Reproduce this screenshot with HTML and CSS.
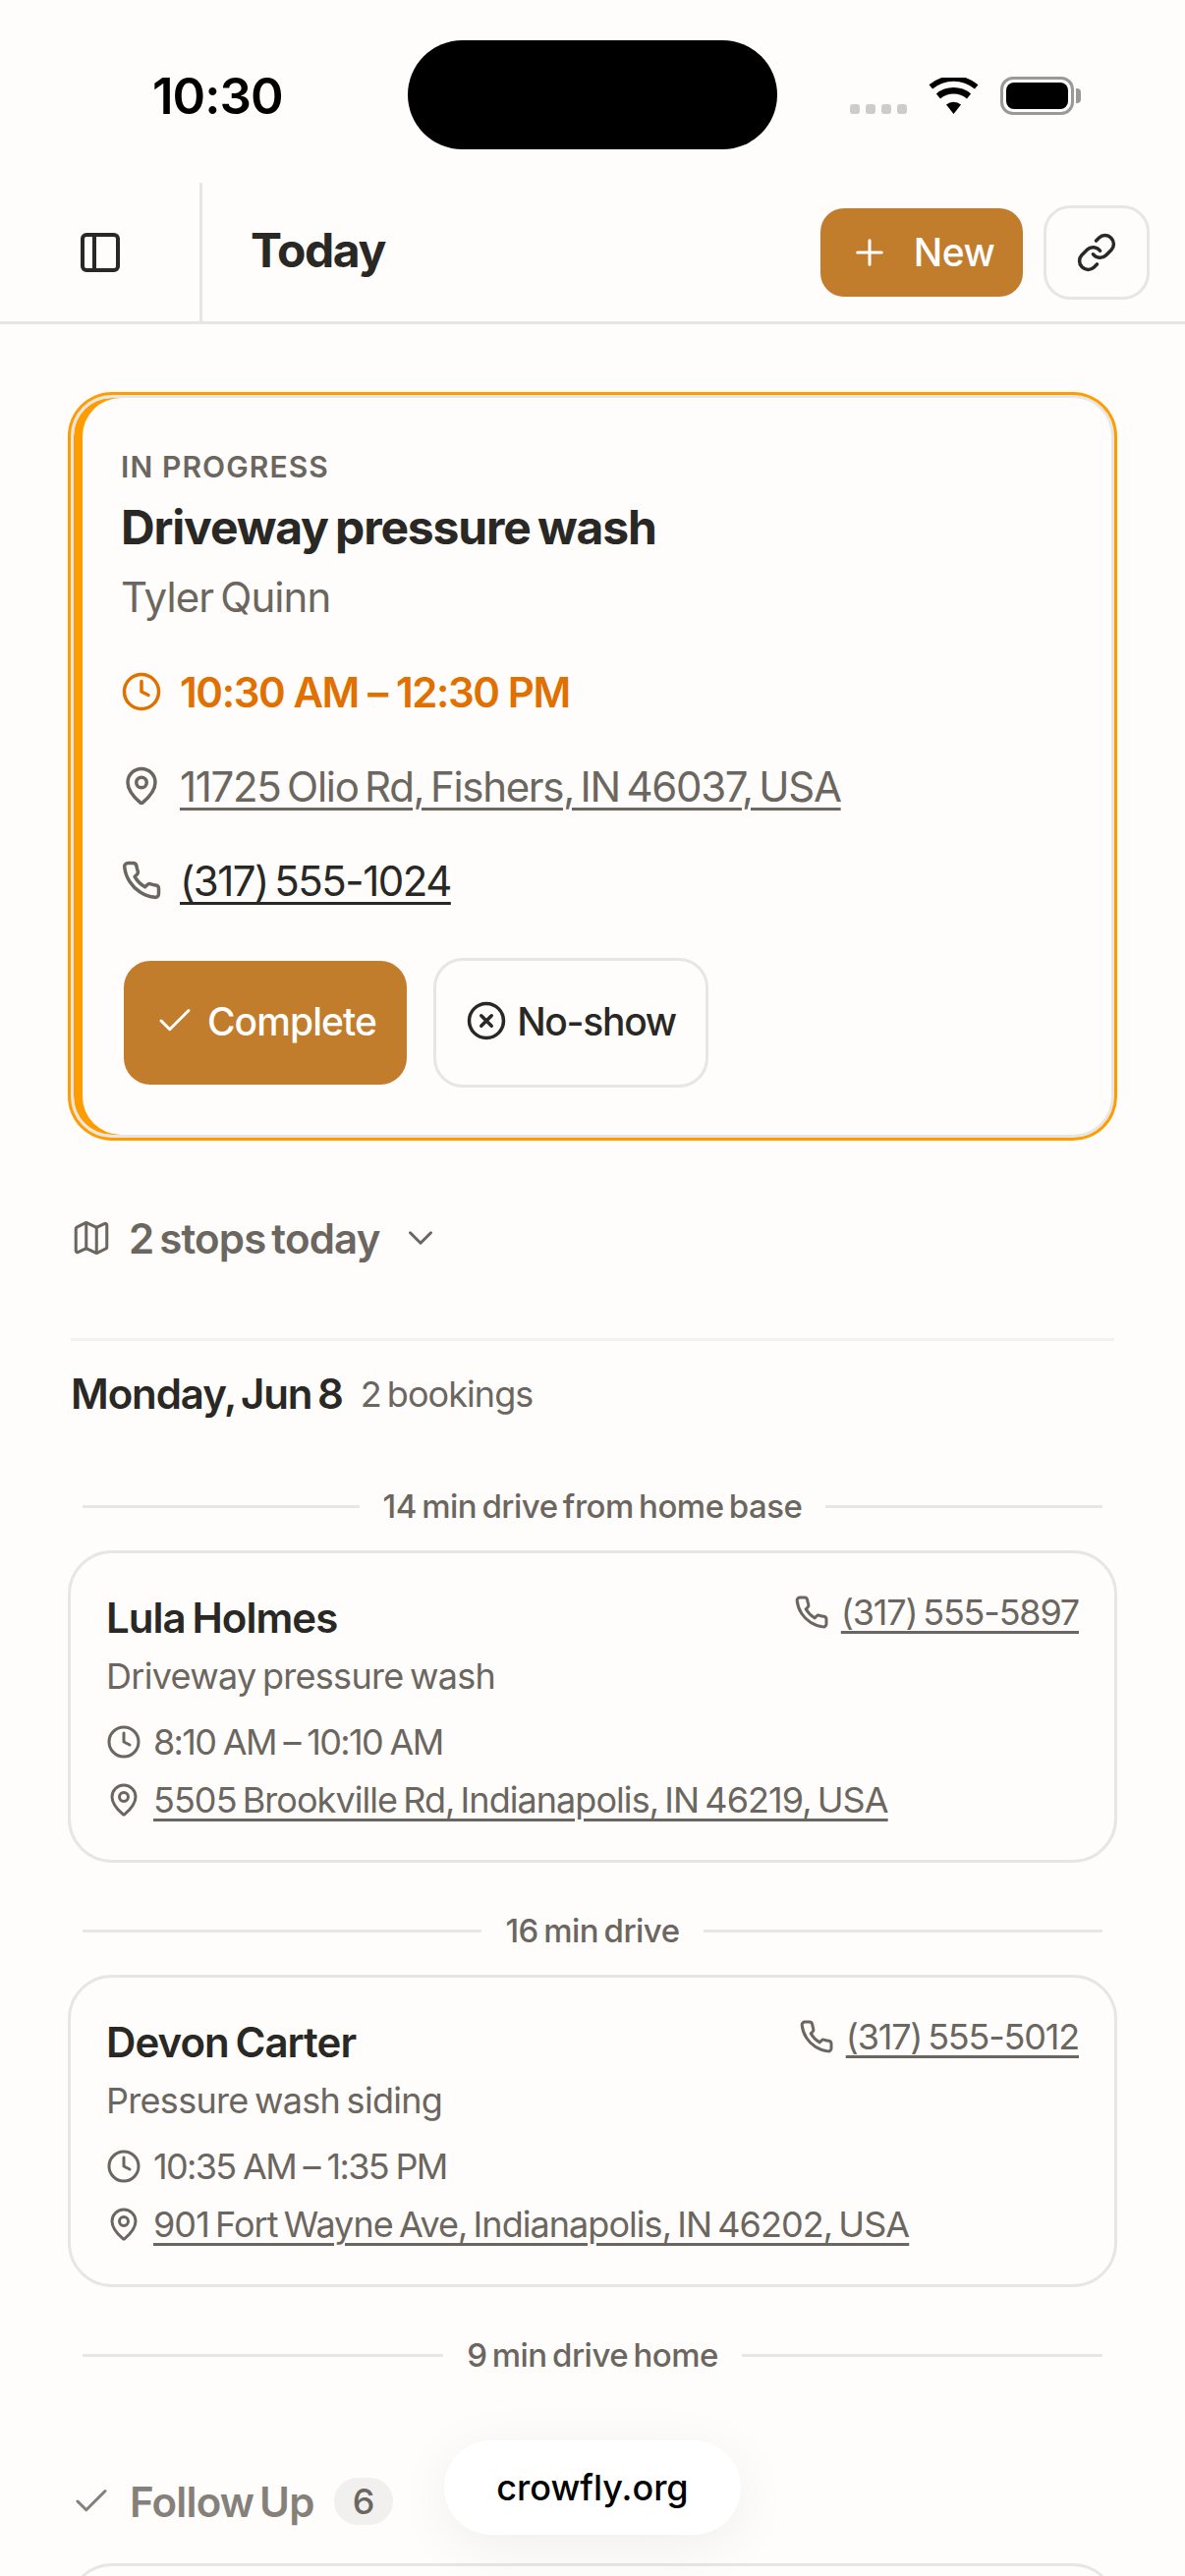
FILE: index.html
```html
<!DOCTYPE html>
<html lang="en">
<head>
<meta charset="utf-8">
<title>Today</title>
<link rel="stylesheet" href="styles.css">
</head>
<body>
<svg class="defs" aria-hidden="true">
  <symbol id="i-panel" viewBox="0 0 24 24"><rect x="3" y="3" width="18" height="18" rx="2"/><path d="M9 3v18"/></symbol>
  <symbol id="i-plus" viewBox="0 0 24 24"><path d="M5 12h14M12 5v14"/></symbol>
  <symbol id="i-link" viewBox="0 0 24 24"><path d="M10 13a5 5 0 0 0 7.54.54l3-3a5 5 0 0 0-7.07-7.07l-1.72 1.71"/><path d="M14 11a5 5 0 0 0-7.54-.54l-3 3a5 5 0 0 0 7.07 7.07l1.71-1.71"/></symbol>
  <symbol id="i-check" viewBox="0 0 24 24"><path d="M20 6 9 17l-5-5"/></symbol>
  <symbol id="i-x" viewBox="0 0 24 24"><circle cx="12" cy="12" r="10"/><path d="m15 9-6 6M9 9l6 6"/></symbol>
  <symbol id="i-clock" viewBox="0 0 24 24"><circle cx="12" cy="12" r="10"/><path d="M12 6v6l4 2"/></symbol>
  <symbol id="i-pin" viewBox="0 0 24 24"><path d="M20 10c0 4.993-5.539 10.193-7.399 11.799a1 1 0 0 1-1.202 0C9.539 20.193 4 14.993 4 10a8 8 0 0 1 16 0"/><circle cx="12" cy="10" r="3"/></symbol>
  <symbol id="i-phone" viewBox="0 0 24 24"><path d="M22 16.92v3a2 2 0 0 1-2.18 2 19.79 19.79 0 0 1-8.63-3.07 19.5 19.5 0 0 1-6-6 19.79 19.79 0 0 1-3.07-8.67A2 2 0 0 1 4.11 2h3a2 2 0 0 1 2 1.72 12.84 12.84 0 0 0 .7 2.81 2 2 0 0 1-.45 2.11L8.09 9.91a16 16 0 0 0 6 6l1.27-1.27a2 2 0 0 1 2.11-.45 12.84 12.84 0 0 0 2.81.7A2 2 0 0 1 22 16.92z"/></symbol>
  <symbol id="i-map" viewBox="0 0 24 24"><path d="M14.106 5.553a2 2 0 0 0 1.788 0l3.659-1.83A1 1 0 0 1 21 4.619v12.764a1 1 0 0 1-.553.894l-4.553 2.277a2 2 0 0 1-1.788 0l-4.212-2.106a2 2 0 0 0-1.788 0l-3.659 1.83A1 1 0 0 1 3 19.381V6.618a1 1 0 0 1 .553-.894l4.553-2.277a2 2 0 0 1 1.788 0z"/><path d="M15 5.764v15M9 3.236v15"/></symbol>
  <symbol id="i-chevron" viewBox="0 0 24 24"><path d="m6 9 6 6 6-6"/></symbol>
</svg>

<div class="screen">
  <div class="statusbar">
    <div class="clock">10:30</div>
    <div class="island"></div>
    <div class="status-icons">
      <div class="signal"><span></span><span></span><span></span><span></span></div>
      <svg class="wifi" viewBox="0 0 50 38"><path d="M25 37 17.5 27.6a11.5 11.5 0 0 1 15 0z"/><path d="M11.5 21.5 7.4 16.4a27 27 0 0 1 35.2 0l-4.1 5.1a20.5 20.5 0 0 0-27 0z"/><path d="M3.6 11.6 0 7.2a39 39 0 0 1 50 0l-3.6 4.4a33 33 0 0 0-42.8 0z"/></svg>
      <div class="battery"><div class="battery-fill"></div></div>
    </div>
  </div>

  <header class="topbar">
    <div class="topbar-side"><svg class="ico ico-48"><use href="#i-panel"/></svg></div>
    <div class="topbar-main">
      <h1 class="page-title">Today</h1>
      <div class="topbar-actions">
        <button class="btn btn-primary btn-new"><svg class="ico ico-42 thin"><use href="#i-plus"/></svg>New</button>
        <button class="btn btn-outline btn-link"><svg class="ico ico-42"><use href="#i-link"/></svg></button>
      </div>
    </div>
  </header>

  <main class="content">
    <section class="current-card">
      <div class="eyebrow">IN PROGRESS</div>
      <h2 class="current-title">Driveway pressure wash</h2>
      <div class="current-client">Tyler Quinn</div>
      <div class="current-rows">
        <div class="row row-time"><svg class="ico ico-42"><use href="#i-clock"/></svg><span>10:30 AM – 12:30 PM</span></div>
        <div class="row row-address"><svg class="ico ico-42"><use href="#i-pin"/></svg><a class="link">11725 Olio Rd, Fishers, IN 46037, USA</a></div>
        <div class="row row-phone"><svg class="ico ico-42"><use href="#i-phone"/></svg><a class="link link-dark">(317) 555-1024</a></div>
      </div>
      <div class="current-actions">
        <button class="btn btn-primary btn-complete"><svg class="ico ico-42 thin"><use href="#i-check"/></svg>Complete</button>
        <button class="btn btn-outline btn-noshow"><svg class="ico ico-42"><use href="#i-x"/></svg>No-show</button>
      </div>
    </section>

    <div class="stops"><svg class="ico ico-42 thin"><use href="#i-map"/></svg><span>2 stops today</span><svg class="ico ico-42 thin"><use href="#i-chevron"/></svg></div>

    <div class="day-head"><span class="day-name">Monday, Jun 8</span><span class="day-count">2 bookings</span></div>

    <div class="drive"><span>14 min drive from home base</span></div>
    <article class="booking">
      <div class="booking-top"><div class="booking-name">Lula Holmes</div><div class="booking-phone"><svg class="ico ico-36"><use href="#i-phone"/></svg><a class="link">(317) 555-5897</a></div></div>
      <div class="booking-service">Driveway pressure wash</div>
      <div class="booking-rows">
        <div class="booking-row booking-time"><svg class="ico ico-36"><use href="#i-clock"/></svg><span>8:10 AM – 10:10 AM</span></div>
        <div class="booking-row"><svg class="ico ico-36"><use href="#i-pin"/></svg><a class="link">5505 Brookville Rd, Indianapolis, IN 46219, USA</a></div>
      </div>
    </article>

    <div class="drive"><span>16 min drive</span></div>
    <article class="booking">
      <div class="booking-top"><div class="booking-name">Devon Carter</div><div class="booking-phone"><svg class="ico ico-36"><use href="#i-phone"/></svg><a class="link">(317) 555-5012</a></div></div>
      <div class="booking-service">Pressure wash siding</div>
      <div class="booking-rows">
        <div class="booking-row booking-time"><svg class="ico ico-36"><use href="#i-clock"/></svg><span>10:35 AM – 1:35 PM</span></div>
        <div class="booking-row"><svg class="ico ico-36"><use href="#i-pin"/></svg><a class="link">901 Fort Wayne Ave, Indianapolis, IN 46202, USA</a></div>
      </div>
    </article>

    <div class="drive"><span>9 min drive home</span></div>

    <div class="followup"><svg class="ico ico-42 thin"><use href="#i-check"/></svg><span class="followup-label">Follow Up</span><span class="badge">6</span></div>
    <article class="booking booking-next"></article>
  </main>

  <div class="url-pill">crowfly.org</div>
</div>
</body>
</html>
```
FILE: styles.css
```css
* { box-sizing: border-box; }
html, body { margin: 0; padding: 0; }
body {
  background: #fefdfb;
  color: #292825;
  font-family: Inter, "Noto Sans", sans-serif;
}
.defs { display: none; }
.screen {
  position: relative;
  width: 1206px;
  height: 2622px;
  overflow: hidden;
  background: #fefdfb;
}
.ico {
  flex: none;
  fill: none;
  stroke: currentColor;
  stroke-width: 2;
  stroke-linecap: round;
  stroke-linejoin: round;
}
.ico.thin { stroke-width: 1.75; }
.ico-36 { width: 36px; height: 36px; }
.ico-42 { width: 42px; height: 42px; }
.ico-48 { width: 48px; height: 48px; }

/* status bar */
.statusbar {
  height: 186px;
  display: grid;
  grid-template-columns: 415px 376px 1fr;
}
.clock {
  padding: 74px 0 0 155px;
  font-size: 51px;
  line-height: 48px;
  font-weight: 600;
  color: #000;
  letter-spacing: -1px;
}
.island {
  margin-top: 41px;
  height: 111px;
  border-radius: 56px;
  background: #000;
}
.status-icons {
  display: flex;
  align-items: flex-start;
  padding: 78px 0 0 74px;
}
.signal { display: flex; gap: 6px; margin-top: 28px; }
.signal span { width: 10px; height: 10px; border-radius: 3px; background: #ccc; }
.wifi { width: 51px; height: 38px; margin: 1px 0 0 22px; fill: #000; }
.battery {
  position: relative;
  width: 75px;
  height: 39px;
  margin-left: 22px;
  border: 3px solid #999;
  border-radius: 13px;
  padding: 3px;
}
.battery::after {
  content: "";
  position: absolute;
  right: -10px;
  top: 9px;
  width: 5px;
  height: 15px;
  border-radius: 0 4px 4px 0;
  background: #999;
}
.battery-fill { width: 100%; height: 100%; background: #000; border-radius: 8px; }

/* top bar */
.topbar {
  display: flex;
  height: 144px;
  border-bottom: 3px solid #e8e6e3;
}
.topbar-side {
  width: 206px;
  flex: none;
  display: flex;
  align-items: center;
  justify-content: center;
  border-right: 3px solid #e8e6e3;
}
.topbar-main {
  flex: 1;
  display: flex;
  align-items: center;
  justify-content: space-between;
  padding: 0 36px 0 49px;
}
.page-title {
  margin: 0 0 4px;
  font-size: 48px;
  font-weight: 700;
  letter-spacing: -1.4px;
}
.topbar-actions { display: flex; gap: 18px; align-items: center; }

/* buttons */
.btn {
  display: inline-flex;
  align-items: center;
  justify-content: center;
  border: 3px solid transparent;
  background-clip: padding-box;
  font-family: inherit;
  padding: 0;
}
.btn-primary { background-color: #c17c2c; color: #fff; }
.btn-outline { background-color: #fefdfb; border-color: #e8e6e3; color: #292825; }
.btn-new {
  width: 212px;
  height: 96px;
  border-radius: 27px;
  gap: 24px;
  font-size: 39px;
  font-weight: 500;
  letter-spacing: -0.6px;
}
.btn-link { width: 108px; height: 96px; border-radius: 27px; }

/* current card */
.content {
  display: flex;
  flex-direction: column;
  padding: 72px 72px 0;
}
.current-card {
  border: 3px solid #e8e6e3;
  border-radius: 42px;
  box-shadow: 0 0 0 3px #ff9d00, inset 9px 0 0 #ff9d00;
  padding: 52px 48px 48px;
  background: #fefdfb;
}
.eyebrow {
  font-size: 30px;
  line-height: 36px;
  font-weight: 600;
  letter-spacing: 1.1px;
  color: #6b6660;
}
.current-title {
  margin: 11px 0 0;
  font-size: 48px;
  line-height: 66px;
  font-weight: 700;
  letter-spacing: -1.15px;
  word-spacing: -3px;
}
.current-client {
  margin-top: 8px;
  font-size: 42px;
  line-height: 60px;
  letter-spacing: -0.9px;
  word-spacing: -4px;
  color: #6b6660;
}
.current-rows { display: flex; flex-direction: column; gap: 36px; margin-top: 36px; }
.row {
  display: flex;
  align-items: center;
  gap: 18px;
  height: 60px;
  font-size: 42px;
  color: #6b6660;
}
.row-time { color: #e07000; font-weight: 600; letter-spacing: -1.4px; }
.row-address { letter-spacing: -1.3px; word-spacing: -4px; }
.row-phone { letter-spacing: -1.5px; word-spacing: -4px; }
.link { color: inherit; text-decoration: underline; text-decoration-thickness: 3px; text-underline-offset: 6px; }
.link-dark { color: #292825; }
.current-actions { display: flex; gap: 24px; margin-top: 49px; }
.btn-complete {
  width: 294px;
  height: 132px;
  padding-bottom: 4px;
  border-radius: 30px;
  gap: 12px;
  font-size: 39px;
  font-weight: 500;
  letter-spacing: -0.9px;
}
.btn-noshow {
  width: 280px;
  height: 132px;
  padding-bottom: 4px;
  border-radius: 30px;
  gap: 10px;
  font-size: 39px;
  font-weight: 500;
  letter-spacing: -1.3px;
}

/* stops */
.stops {
  display: flex;
  align-items: center;
  height: 60px;
  margin-top: 72px;
  font-size: 42px;
  font-weight: 600;
  letter-spacing: -0.8px;
  word-spacing: -4px;
  color: #6b6660;
}
.stops span { margin: 0 20px 0 17px; }
.day-head {
  display: flex;
  align-items: center;
  gap: 18px;
  margin-top: 72px;
  padding-top: 29px;
  height: 82px;
  line-height: 50px;
  border-top: 3px solid #f3f2f0;
}
.day-name { font-size: 42px; font-weight: 600; letter-spacing: -1.1px; word-spacing: -4px; }
.day-count { font-size: 36px; color: #6b6660; letter-spacing: -0.95px; word-spacing: -3px; }

/* drive separators */
.drive {
  display: flex;
  align-items: center;
  gap: 24px;
  height: 44px;
  padding: 0 12px;
  font-size: 33px;
  font-weight: 500;
  letter-spacing: -0.5px;
  word-spacing: -3px;
  color: #6b6660;
  margin: 47px 0 23px;
}
.day-head + .drive { margin-top: 67px; }
.drive::before, .drive::after {
  content: "";
  flex: 1;
  height: 3px;
  background: #e8e6e3;
}

/* bookings */
.booking {
  margin: 0 -3px;
  height: 318px;
  flex: none;
  border: 3px solid #e8e6e3;
  border-radius: 45px;
  padding: 36px;
}
.booking-top { display: flex; justify-content: space-between; align-items: flex-start; }
.booking-name { font-size: 42px; line-height: 60px; font-weight: 600; letter-spacing: -0.95px; word-spacing: -3px; }
.booking-phone {
  display: flex;
  align-items: center;
  gap: 12px;
  font-size: 36px;
  line-height: 48px;
  letter-spacing: -1.2px;
  word-spacing: -3px;
  color: #6b6660;
}
.booking-service {
  margin-top: 2px;
  font-size: 36px;
  line-height: 54px;
  letter-spacing: -0.7px;
  word-spacing: -3px;
  color: #6b6660;
}
.booking-rows { display: flex; flex-direction: column; gap: 5px; margin-top: 13px; }
.booking-row {
  display: flex;
  align-items: center;
  gap: 12px;
  height: 54px;
  font-size: 36px;
  letter-spacing: -0.95px;
  word-spacing: -3px;
  color: #6b6660;
}
.booking-time { letter-spacing: -1.65px; word-spacing: -1px; }

/* follow-up */
.followup {
  display: flex;
  align-items: center;
  height: 48px;
  flex: none;
  margin-top: 80px;
  font-size: 42px;
  font-weight: 600;
  letter-spacing: -0.8px;
  word-spacing: -4px;
  color: #85817a;
}
.followup-label { margin: 0 20px 0 18px; }
.badge {
  width: 60px;
  height: 48px;
  border-radius: 24px;
  background: #f1f0ee;
  display: flex;
  align-items: center;
  justify-content: center;
  font-size: 36px;
  font-weight: 500;
  color: #6b6660;
}
.booking-next { margin-top: 39px; }

/* url pill */
.url-pill {
  position: absolute;
  left: 452px;
  bottom: 42px;
  width: 302px;
  height: 96px;
  border-radius: 48px;
  background: #fff;
  display: flex;
  align-items: center;
  justify-content: center;
  font-size: 36px;
  font-weight: 500;
  color: #000;
  box-shadow: 0 12px 60px rgba(0,0,0,0.06);
}
```
